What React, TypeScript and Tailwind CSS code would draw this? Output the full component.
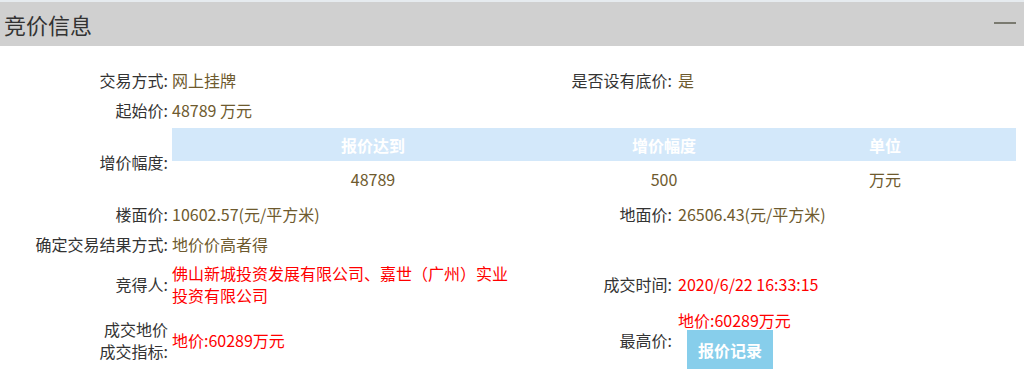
export default function App() {
  const font = { fontFamily: '"Microsoft YaHei", "Noto Sans CJK SC", "Noto Sans", sans-serif' }

  return (
    <div className="w-[1024px] h-[387px] bg-white overflow-hidden text-[16px] text-[#333]" style={font}>
      <div className="h-[2px] bg-[#e6ebef]" />
      {/* 标题栏 */}
      <div className="h-[44px] bg-[#d0d0d0] flex items-center justify-between pl-[4px] pr-[8px]">
        <span className="text-[22px] text-[#333]">竞价信息</span>
        <span className="block w-[22px] h-[2px] bg-[#7a7a70] mt-[-3px]" />
      </div>

      <table className="mt-[19px] border-collapse table-fixed w-[1024px]">
        <colgroup>
          <col className="w-[172px]" />
          <col className="w-[338px]" />
          <col className="w-[168px]" />
          <col />
        </colgroup>
        <tbody>
          <tr className="h-[30px]">
            <td className="text-right pr-[4px]">交易方式:</td>
            <td className="text-[#6e5a2e]">网上挂牌</td>
            <td className="text-right pr-[6px]">是否设有底价:</td>
            <td className="text-[#6e5a2e]">是</td>
          </tr>
          <tr className="h-[30px]">
            <td className="text-right pr-[4px]">起始价:</td>
            <td className="text-[#6e5a2e]">48789 万元</td>
            <td />
            <td />
          </tr>
          <tr>
            <td className="text-right pr-[4px] align-middle">增价幅度:</td>
            <td colSpan={3} className="py-[3px] pr-[8px]">
              <table className="w-full border-collapse table-fixed">
                <colgroup>
                  <col className="w-[402px]" />
                  <col className="w-[180px]" />
                  <col />
                </colgroup>
                <thead>
                  <tr className="h-[33px] bg-[#d3e8fa] text-white font-bold">
                    <th>报价达到</th>
                    <th>增价幅度</th>
                    <th>单位</th>
                  </tr>
                </thead>
                <tbody>
                  <tr className="h-[35px] text-center text-[#6e5a2e]">
                    <td>48789</td>
                    <td>500</td>
                    <td>万元</td>
                  </tr>
                </tbody>
              </table>
            </td>
          </tr>
          <tr className="h-[30px]">
            <td className="text-right pr-[4px]">楼面价:</td>
            <td className="text-[#6e5a2e]">10602.57(元/平方米)</td>
            <td className="text-right pr-[6px]">地面价:</td>
            <td className="text-[#6e5a2e]">26506.43(元/平方米)</td>
          </tr>
          <tr className="h-[30px]">
            <td className="text-right pr-[4px]">确定交易结果方式:</td>
            <td className="text-[#6e5a2e]">地价价高者得</td>
            <td />
            <td />
          </tr>
          <tr className="h-[50px]">
            <td className="text-right pr-[4px]">竞得人:</td>
            <td className="text-[#ff0000] leading-[22px]">佛山新城投资发展有限公司、嘉世（广州）实业投资有限公司</td>
            <td className="text-right pr-[6px]">成交时间:</td>
            <td className="text-[#ff0000]">2020/6/22 16:33:15</td>
          </tr>
          <tr className="h-[61px]">
            <td className="text-right pr-[4px] leading-[22px]">
              成交地价
              <br />
              成交指标:
            </td>
            <td className="text-[#ff0000]">地价:60289万元</td>
            <td className="text-right pr-[6px]">最高价:</td>
            <td>
              <div className="text-[#ff0000] leading-[20px]">地价:60289万元</div>
              <button className="ml-[9px] w-[86px] h-[39px] bg-[#87ceeb] text-white font-bold text-[16px]">
                报价记录
              </button>
            </td>
          </tr>
        </tbody>
      </table>
    </div>
  )
}
